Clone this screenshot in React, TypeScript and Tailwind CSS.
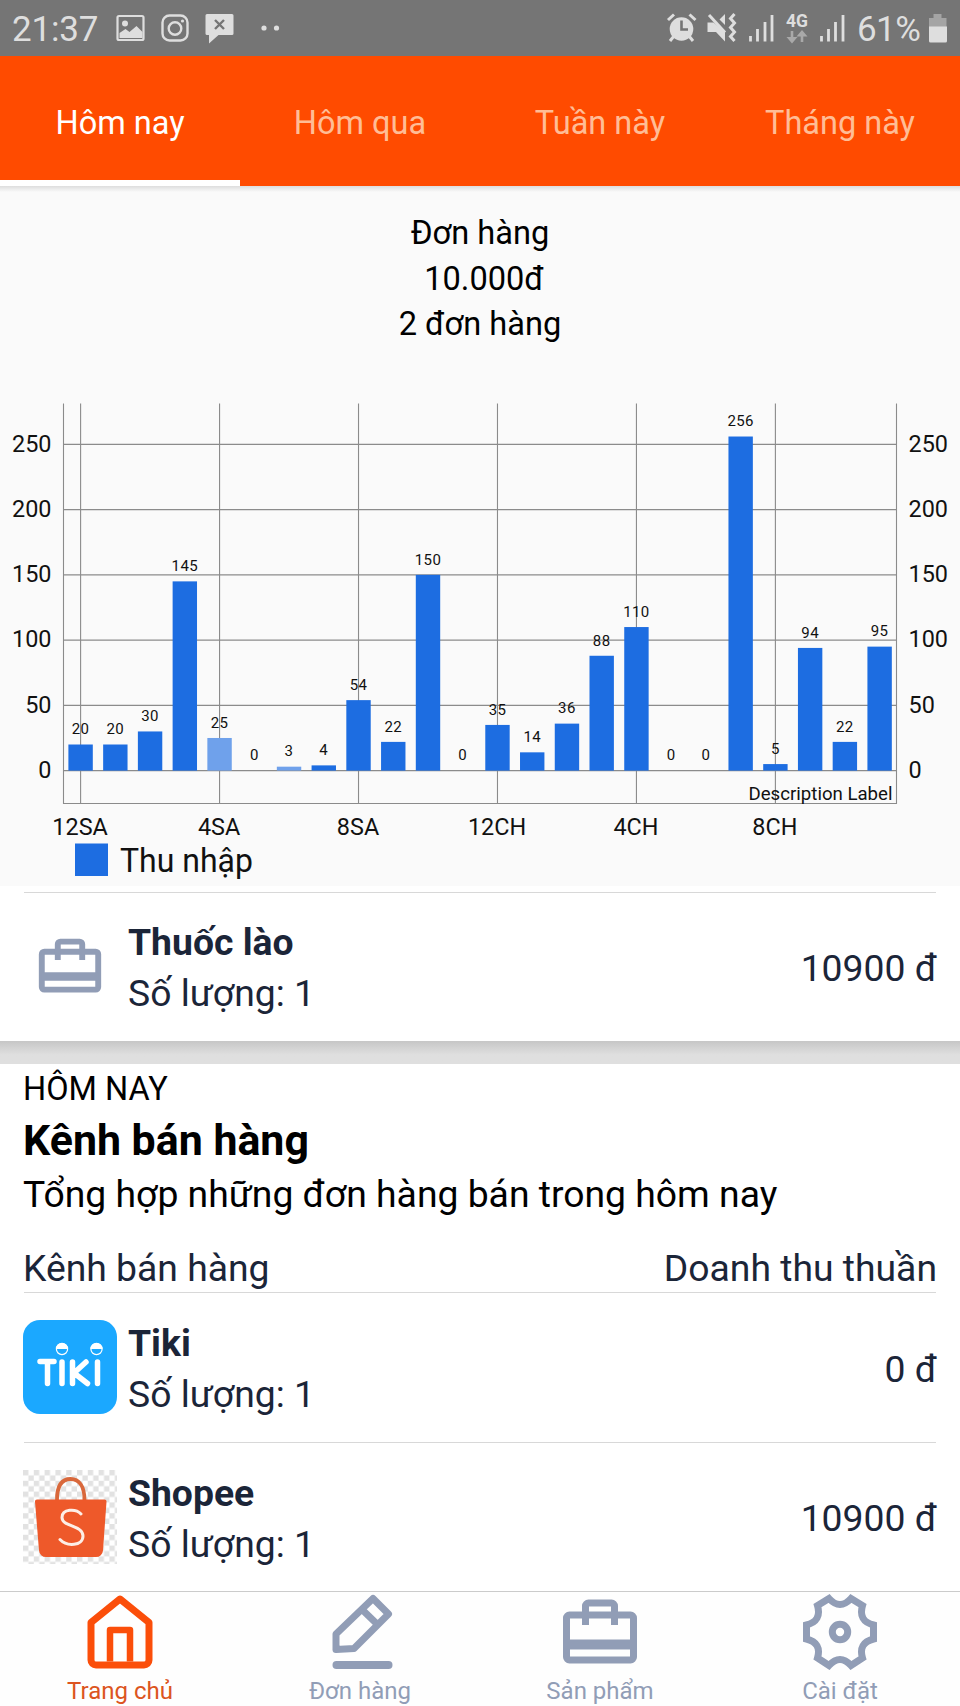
import type { ReactNode } from "react";

const TABS = ["Hôm nay", "Hôm qua", "Tuần này", "Tháng này"];

const BARS = [
  20, 20, 30, 145, 25, 0, 3, 4, 54, 22, 150, 0, 35, 14, 36, 88, 110, 0, 0, 256,
  5, 94, 22, 95,
];
const LIGHT_BARS = [4, 6];
const HOURS = ["12SA", "4SA", "8SA", "12CH", "4CH", "8CH"];
const TICKS = [0, 50, 100, 150, 200, 250];

const barX = (i: number) => 80.6 + i * 34.74;
const valueY = (v: number) => 400.6 - v * 1.305;

function StatusBar() {
  return (
    <div className="flex h-14 items-center bg-[#757575] text-[#dedede]">
      <span className="ml-[12px] w-[86px] pt-[3px] text-[35px] leading-none tracking-[-0.2px]">
        21:37
      </span>
      <svg className="ml-[17px]" width="170" height="56" viewBox="0 0 170 56" fill="none">
        <rect x="2.500" y="16" width="26" height="24" rx="1.5" stroke="currentColor" strokeWidth="2.2" />
        <circle cx="10" cy="23.500" r="3" fill="currentColor" />
        <path d="M4.500 38V33L10.500 29l4 3 7-6 6 6v6z" fill="currentColor" />
        <rect x="47.500" y="15.500" width="25" height="25" rx="7" stroke="currentColor" strokeWidth="2.4" />
        <circle cx="60" cy="28.500" r="6.300" stroke="currentColor" strokeWidth="2.400" />
        <circle cx="67.500" cy="21" r="1.600" fill="currentColor" />
        <path d="M92 14h25a1.500 1.500 0 0 1 1.500 1.500v18a1.500 1.500 0 0 1-1.500 1.500h-13.500l-9.500 8.500V35h-2a1.500 1.500 0 0 1-1.500-1.500v-18A1.500 1.500 0 0 1 92 14z" fill="currentColor" />
        <path d="M100 20l9 9M109 20l-9 9" stroke="#757575" strokeWidth="2.400" />
        <circle cx="149" cy="28" r="2.600" fill="currentColor" />
        <circle cx="161.500" cy="28" r="2.600" fill="currentColor" />
      </svg>
      <svg className="ml-auto" width="190" height="56" viewBox="0 0 190 56" fill="none">
        {/* alarm */}
        <circle cx="17.500" cy="29" r="11.800" fill="currentColor" />
        <path d="M4 20l6-5.500M25.500 14.500l6 5.500" stroke="currentColor" strokeWidth="3" />
        <path d="M10 36l-4 5M25 36l4 5" stroke="currentColor" strokeWidth="3" />
        <path d="M17.500 20.500v9h6.500" stroke="#757575" strokeWidth="2.600" />
        {/* muted speaker */}
        <path d="M43.500 22.500h6L61 32v9.500l-9-9.500h-8.500z" fill="currentColor" />
        <path d="M61 14v11l-5.500-5.500z" fill="currentColor" />
        <path d="M45 15l16 17.500" stroke="currentColor" strokeWidth="3" />
        <path d="M70.500 14l-4 4.500 4 4.500-4 4.500 4 4.500-4 4.500 4 4.500" stroke="currentColor" strokeWidth="3" />
        {/* signal */}
        <path d="M86.500 36v5.500M93.500 29v12.500M101 22v19.500M108 15v26.500" stroke="currentColor" strokeWidth="2.800" />
        <text x="122" y="26.500" fontSize="17.500" fontWeight="700" fill="currentColor" textLength="22" lengthAdjust="spacingAndGlyphs">
          4G
        </text>
        <path d="M128 31v8M138 42v-8" stroke="#a9a9a9" strokeWidth="2.600" />
        <path d="M122.500 37h11L128 43.500zM132.500 36.500h11L138 30z" fill="#a9a9a9" />
        <path d="M157.500 36v5.500M164.500 29v12.500M171.500 22v19.500M179 15v26.500" stroke="currentColor" strokeWidth="2.800" />
      </svg>
      <span className="w-[72px] pt-[3px] pl-[3px] text-[35px] leading-none tracking-[-0.6px]">61%</span>
      <svg width="34" height="56" viewBox="0 0 34 56">
        <path d="M7.500 14h8v4h5v9H3v-9h4.500z" fill="#a4a4a4" />
        <path d="M3 26.500h18V41a1.500 1.500 0 0 1-1.500 1.500h-15A1.500 1.500 0 0 1 3 41z" fill="currentColor" />
      </svg>
    </div>
  );
}

function Chart() {
  return (
    <svg className="block" width="960" height="516" viewBox="0 0 960 516">
      <g stroke="#8b8b8b" strokeWidth="1.100">
        {TICKS.map((t) => (
          <line key={t} x1="63.500" x2="896.500" y1={valueY(t)} y2={valueY(t)} />
        ))}
        {HOURS.map((h, i) => (
          <line key={h} x1={barX(i * 4)} x2={barX(i * 4)} y1="33.500" y2="433.500" />
        ))}
        <path d="M63.500 33.500V433.500H896.500V33.500" fill="none" />
      </g>
      {BARS.map((v, i) => (
        <rect
          key={i}
          x={barX(i) - 12.2}
          y={valueY(v)}
          width="24.400"
          height={v * 1.305}
          fill={LIGHT_BARS.includes(i) ? "#6fa1eb" : "#1d6de1"}
        />
      ))}
      <g fontSize="15" fill="#111" textAnchor="middle" letterSpacing="0.400">
        {BARS.map((v, i) => (
          <text key={i} x={barX(i)} y={valueY(v) - 10.2}>
            {v}
          </text>
        ))}
      </g>
      <g fontSize="23.400" fill="#111">
        {TICKS.map((t) => (
          <g key={t}>
            <text x="51.500" y={valueY(t) + 7.2} textAnchor="end">
              {t}
            </text>
            <text x="908.500" y={valueY(t) + 7.2}>
              {t}
            </text>
          </g>
        ))}
        {HOURS.map((h, i) => (
          <text key={h} x={barX(i * 4) - 0.5} y="465.200" textAnchor="middle">
            {h}
          </text>
        ))}
      </g>
      <text x="892.500" y="430" fontSize="19" fill="#111" textAnchor="end" textLength="144" lengthAdjust="spacingAndGlyphs">
        Description Label
      </text>
      <rect x="75" y="473.500" width="33" height="32.500" fill="#1d6de1" />
      <text x="120" y="501.700" fontSize="32.500" fill="#111" textLength="133" lengthAdjust="spacingAndGlyphs">
        Thu nhập
      </text>
    </svg>
  );
}

function BriefcaseIcon({ size }: { size: number }) {
  return (
    <svg width={size} height={size} viewBox="0 0 76 76" fill="none" stroke="#919db6" strokeWidth="7">
      <rect x="4.500" y="21" width="67" height="45" rx="3" />
      <path d="M23.500 31V12a3 3 0 0 1 3-3h23a3 3 0 0 1 3 3v19" />
      <path d="M4.500 50.500h67" strokeWidth="10" />
    </svg>
  );
}

function TikiLogo() {
  return (
    <svg width="94" height="94" viewBox="0 0 94 94" fill="none">
      <rect width="94" height="94" rx="17" fill="#1ba8ff" />
      <g stroke="#fff" strokeWidth="5.500" strokeLinecap="round" strokeLinejoin="round">
        <path d="M17 41.500h14M24.500 41.500v22M39 42v21.500M49.500 42v21.500M63 42L51 53l13.500 10.500M74.500 42v21.500" />
      </g>
      <g stroke="#fff" strokeWidth="1.200">
        <circle cx="39" cy="29" r="5.600" />
        <circle cx="73.500" cy="29" r="5.600" />
      </g>
      <path d="M33 29a6 6 0 0 1 12 0zM67.500 29a6 6 0 0 1 12 0z" fill="#fff" />
    </svg>
  );
}

function ShopeeLogo() {
  return (
    <svg width="94" height="94" viewBox="0 0 94 94" fill="none">
      <defs>
        <pattern id="checks" width="10.800" height="10.800" patternUnits="userSpaceOnUse">
          <rect width="5.400" height="5.400" fill="#e2e2e2" />
          <rect x="5.400" y="5.400" width="5.400" height="5.400" fill="#e2e2e2" />
        </pattern>
      </defs>
      <rect width="94" height="94" fill="#fff" />
      <rect width="94" height="94" fill="url(#checks)" />
      <path d="M34 30C34 16 39 9 47.500 9S61.500 16 61.500 30" stroke="#d9683b" strokeWidth="3.800" />
      <path d="M14 29.500h67.500a2 2 0 0 1 2 2.200L80 80.500a7 7 0 0 1-7 6.500H23a7 7 0 0 1-7-6.500L12 31.700a2 2 0 0 1 2-2.200z" fill="#ee592a" />
      <path d="M58 44c-5-5.500-19-5.500-19 3.500 0 9.500 21 7.500 21 18.500 0 10-16 11-23 3.500" stroke="#fdeee6" strokeWidth="3" strokeLinecap="round" />
    </svg>
  );
}

function ItemRow({ icon, name, amount }: { icon: ReactNode; name: string; amount: string }) {
  return (
    <div className="mx-6 flex h-[149.500px] shrink-0 items-center border-t border-[#d8d8d8] text-[37.300px] text-[#1b2538]">
      <div className="-ml-px flex w-[94px] justify-center">{icon}</div>
      <div className="ml-[11px] grow pt-1 leading-[51px]">
        <div className="font-bold">{name}</div>
        <div>Số lượng: 1</div>
      </div>
      <div className="-mr-px pt-[5px]">{amount}</div>
    </div>
  );
}

const HomeIcon = () => (
  <svg width="76" height="76" viewBox="0 0 76 76" fill="none" stroke="#fb4e0a" strokeWidth="7" strokeLinejoin="round">
    <path d="M38 5L67 28.500v37.500a5 5 0 0 1-5 5h-48a5 5 0 0 1-5-5V28.500z" />
    <path d="M28 67.500V36h20v31.500" strokeWidth="6.500" />
  </svg>
);

const PencilIcon = () => (
  <svg width="76" height="76" viewBox="0 0 76 76" fill="none" stroke="#919db6" strokeWidth="7" strokeLinejoin="round">
    <path d="M14 55.500V40L51 4.500 66.500 20 32 54.500z" />
    <path d="M40 15.500L55 30" />
    <path d="M14.500 71h52" strokeWidth="8" strokeLinecap="round" />
  </svg>
);

const GearIcon = () => (
  <svg width="76" height="76" viewBox="0 0 76 76" fill="none" stroke="#919db6" strokeWidth="7">
    <path d="M27 4.500Q38 16.500 49 4.500L60.500 11.500Q56 27 71.500 31V45Q56 49 60.500 64L49 71.500Q38 59.500 27 71.500L15.500 64Q20 49 4.500 45V31Q20 27 15.500 11.500Z" strokeLinejoin="miter" />
    <circle cx="38" cy="38" r="7.700" />
  </svg>
);

const NAV = [
  { label: "Trang chủ", icon: <HomeIcon />, active: true },
  { label: "Đơn hàng", icon: <PencilIcon />, active: false },
  { label: "Sản phẩm", icon: <BriefcaseIcon size={76} />, active: false },
  { label: "Cài đặt", icon: <GearIcon />, active: false },
];

export default function App() {
  return (
    <div className="flex h-[1706px] w-[960px] flex-col overflow-hidden bg-white font-[Roboto,sans-serif] text-black">
      <StatusBar />

      {/* Period tabs */}
      <div className="grid h-[130px] grid-cols-4 bg-[#ff4b00] text-[32.500px]">
        {TABS.map((tab, i) => (
          <div
            key={tab}
            className={`flex items-center justify-center border-b-[6px] pt-[10px] ${
              i === 0 ? "border-white text-white" : "border-transparent text-[#ffbd96]"
            }`}
          >
            {tab}
          </div>
        ))}
      </div>

      {/* Order summary and income chart */}
      <div className="h-[700px] shrink-0 bg-[#fafafa]">
        <div className="h-1.5 bg-linear-to-b from-[#dddddd] to-[#fafafa]" />
        <div className="flex h-[178px] flex-col items-center pt-[19px] text-[32.600px] leading-[45.500px]">
          <div>Đơn hàng</div>
          <div className="ml-2">10.000đ</div>
          <div>2 đơn hàng</div>
        </div>
        <Chart />
      </div>

      <div className="h-[155px] shrink-0 overflow-hidden pt-1.5">
        <div className="-mb-1 [&>div]:h-[147px]">
          <ItemRow icon={<BriefcaseIcon size={64} />} name="Thuốc lào" amount="10900 đ" />
        </div>
      </div>
      <div className="h-[23px] shrink-0 bg-linear-to-b from-[#c6c6c6] to-[#dfdfdf] to-60%" />

      {/* Sales channels */}
      <div className="h-[228px] shrink-0 px-[23px] pt-1">
        <div className="text-[32.500px] leading-[42px]">HÔM NAY</div>
        <div className="text-[42.900px] leading-[61px] font-bold">Kênh bán hàng</div>
        <div className="text-[37.300px] leading-[46px]">Tổng hợp những đơn hàng bán trong hôm nay</div>
        <div className="mt-[27px] flex justify-between text-[37.300px] leading-[48px] text-[#1b2538]">
          <span>Kênh bán hàng</span>
          <span>Doanh thu thuần</span>
        </div>
      </div>
      <ItemRow icon={<TikiLogo />} name="Tiki" amount="0 đ" />
      <ItemRow icon={<ShopeeLogo />} name="Shopee" amount="10900 đ" />

      {/* Bottom navigation */}
      <div className="grid h-[115px] shrink-0 grid-cols-4 border-t border-[#cbcbcb] bg-[#fefefe]">
        {NAV.map((item) => (
          <div
            key={item.label}
            className={`flex flex-col items-center gap-[3px] pt-0.5 text-[24px] leading-[36px] ${
              item.active ? "text-[#dc5420]" : "text-[#919db6]"
            }`}
          >
            {item.icon}
            {item.label}
          </div>
        ))}
      </div>
    </div>
  );
}
